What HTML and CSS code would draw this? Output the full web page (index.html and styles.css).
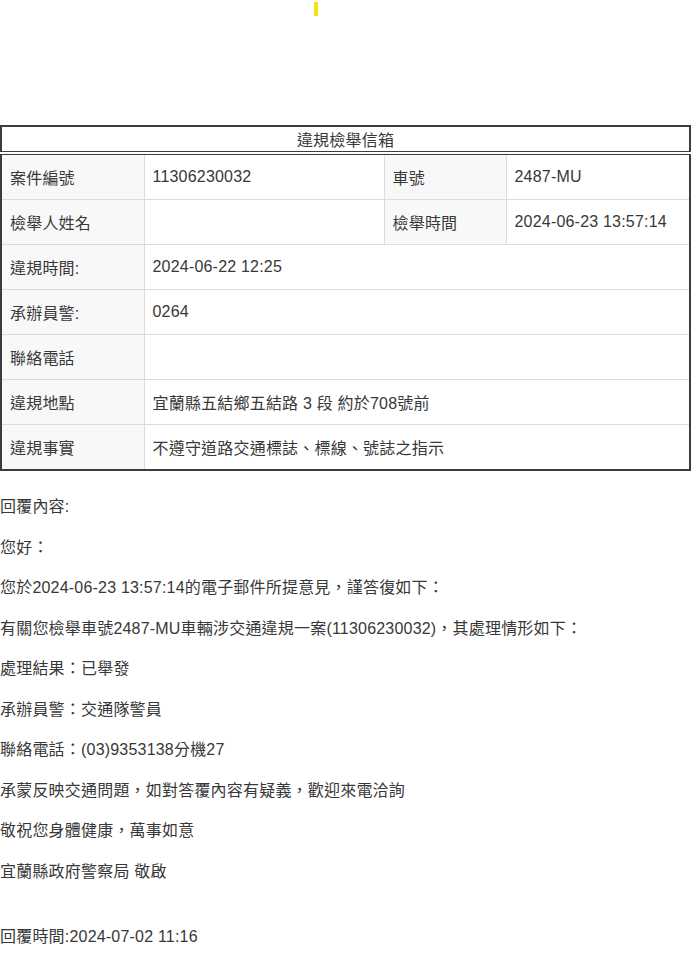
FILE: index.html
```html
<!DOCTYPE html>
<html lang="zh-Hant">
<head>
<meta charset="utf-8">
<title>違規檢舉信箱</title>
<link rel="stylesheet" href="styles.css">
</head>
<body>
<div class="top"><span class="mark"></span></div>
<table class="report">
  <colgroup>
    <col class="c1"><col class="c2"><col class="c3"><col class="c4">
  </colgroup>
  <thead>
    <tr><th colspan="4" class="title">違規檢舉信箱</th></tr>
  </thead>
  <tbody>
    <tr class="first"><td class="lbl">案件編號</td><td>11306230032</td><td class="lbl">車號</td><td>2487-MU</td></tr>
    <tr><td class="lbl">檢舉人姓名</td><td></td><td class="lbl">檢舉時間</td><td>2024-06-23 13:57:14</td></tr>
    <tr><td class="lbl">違規時間:</td><td colspan="3">2024-06-22 12:25</td></tr>
    <tr><td class="lbl">承辦員警:</td><td colspan="3">0264</td></tr>
    <tr><td class="lbl">聯絡電話</td><td colspan="3"></td></tr>
    <tr><td class="lbl">違規地點</td><td colspan="3">宜蘭縣五結鄉五結路 3 段 約於708號前</td></tr>
    <tr><td class="lbl">違規事實</td><td colspan="3">不遵守道路交通標誌、標線、號誌之指示</td></tr>
  </tbody>
</table>
<div class="reply">
  <p>回覆內容:</p>
  <p>您好：</p>
  <p>您於2024-06-23 13:57:14的電子郵件所提意見，謹答復如下：</p>
  <p>有關您檢舉車號2487-MU車輛涉交通違規一案(11306230032)，其處理情形如下：</p>
  <p>處理結果：已舉發</p>
  <p>承辦員警：交通隊警員</p>
  <p>聯絡電話：(03)9353138分機27</p>
  <p>承蒙反映交通問題，如對答覆內容有疑義，歡迎來電洽詢</p>
  <p>敬祝您身體健康，萬事如意</p>
  <p>宜蘭縣政府警察局 敬啟</p>
  <p class="time">回覆時間:2024-07-02 11:16</p>
</div>
</body>
</html>
```

FILE: styles.css
```css
html, body {
  margin: 0;
  padding: 0;
  background: #ffffff;
}
body {
  font-family: "Liberation Sans", "Noto Sans CJK TC", Arial, sans-serif;
  font-size: 16px;
  color: #383838;
  letter-spacing: 0.2px;
}
.top {
  height: 125px;
  display: flex;
  align-items: flex-start;
}
.mark {
  display: block;
  width: 4px;
  height: 14px;
  margin-left: 314px;
  margin-top: 2px;
  background: #f4e20a;
}
.report {
  width: 691px;
  border-collapse: collapse;
  border: 2px solid #3c3c3c;
  table-layout: fixed;
}
.c1 { width: 143px; }
.c2 { width: 240px; }
.c3 { width: 122px; }
.c4 { width: auto; }
.title {
  font-weight: normal;
  text-align: center;
  height: 24px;
  padding: 0;
  border-bottom: 4px double #3c3c3c;
}
.report td {
  height: 44px;
  padding: 0 8px;
  border: 1px solid #dcdcdc;
  vertical-align: middle;
  white-space: nowrap;
}
.report td.lbl {
  background: #f8f8f8;
}
.reply {
  padding-top: 16px;
}
.reply p {
  margin: 0;
  line-height: 40.5px;
}
.reply .time {
  margin-top: 25px;
}
```
